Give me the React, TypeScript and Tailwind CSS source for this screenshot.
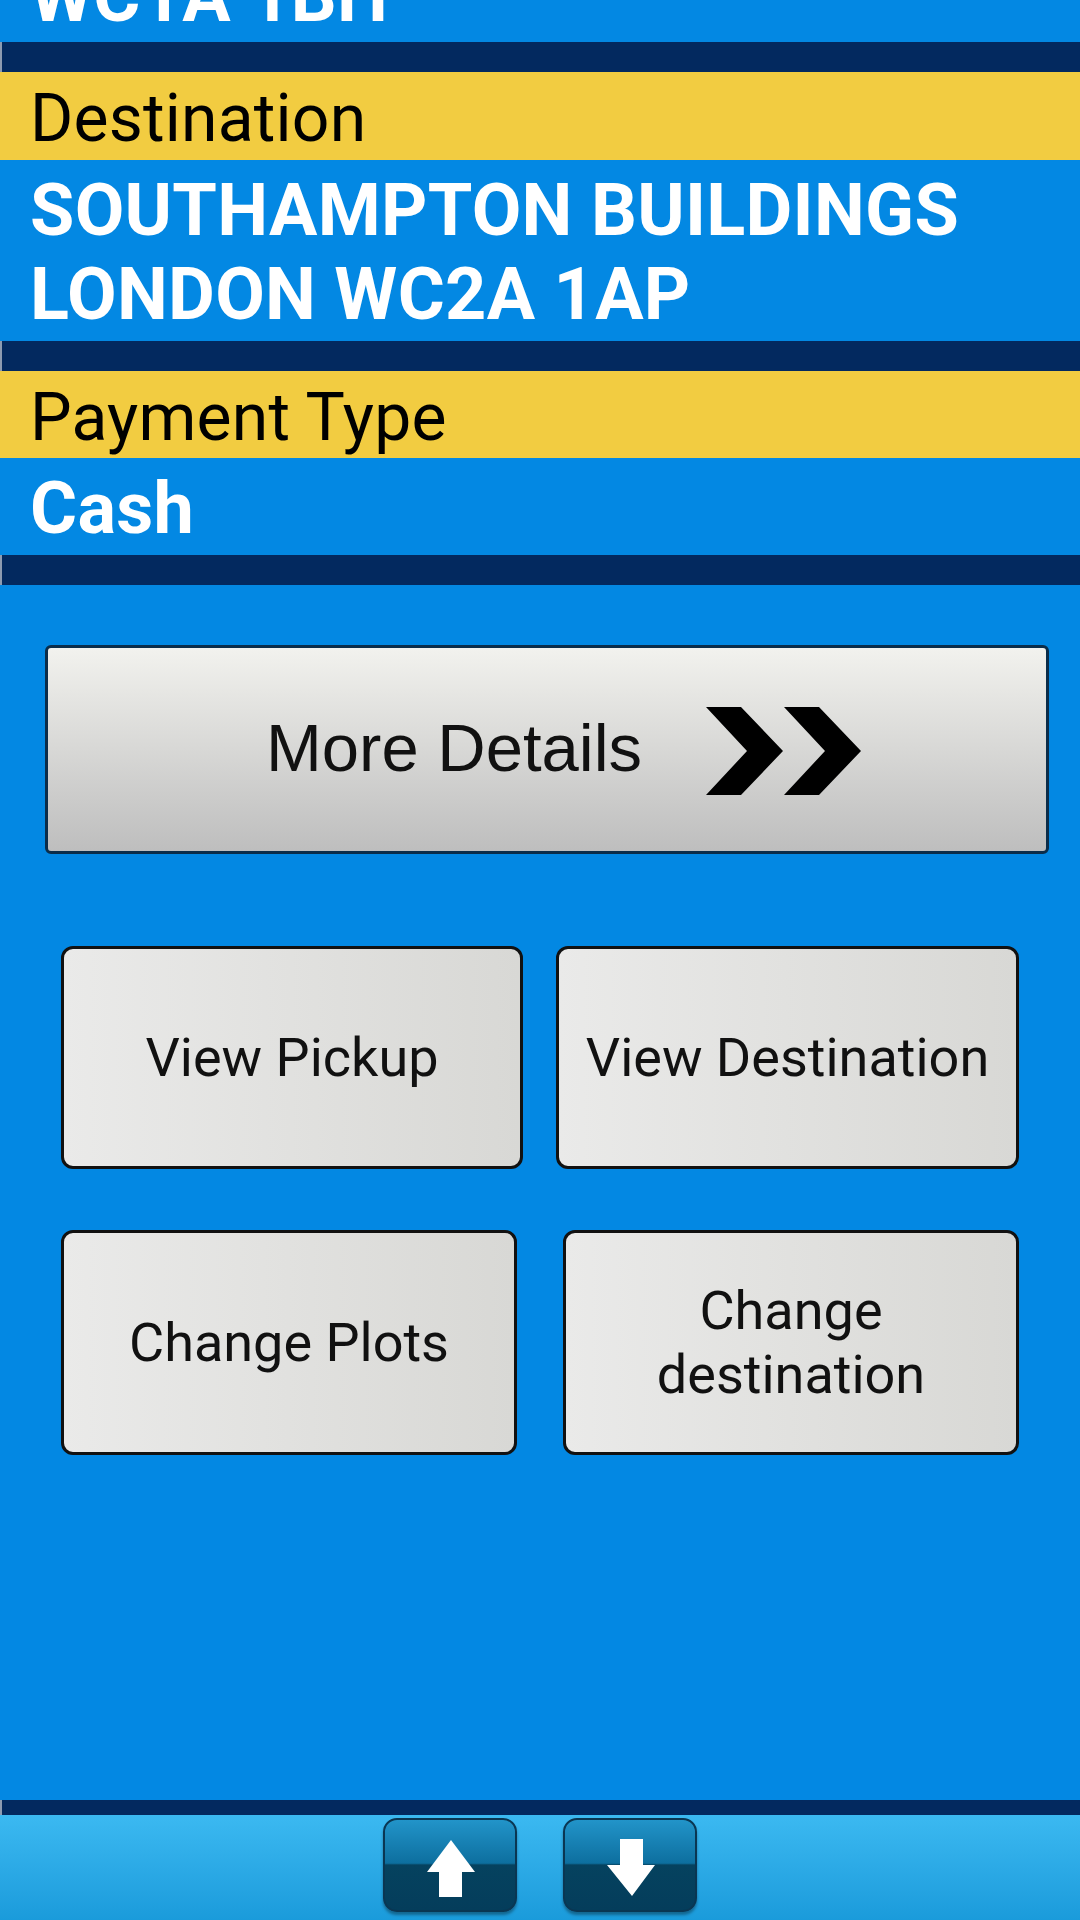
import React from 'react';

function Divider() {
  return <div className="h-[30px] shrink-0 bg-[#03295f] border-l-2 border-[#8d9bb1]" />;
}

function Label({ text, height }: { text: string; height: string }) {
  return (
    <div className={`${height} shrink-0 bg-[#f2cc41] pl-[30px] pt-[8px] text-[66px] tracking-[0.2px] leading-[1.172] text-black`}>
      {text}
    </div>
  );
}

function Value({ lines, height }: { lines: string[]; height: string }) {
  return (
    <div className={`${height} shrink-0 pl-[30px] pt-[9px] text-[72px] tracking-[0.3px] font-bold leading-[1.172] text-white`}>
      {lines.map((l) => (
        <div key={l}>{l}</div>
      ))}
    </div>
  );
}

function GridButton({ label, width }: { label: string; width: string }) {
  return (
    <button
      className={`${width} h-full rounded-[12px] border-[3px] border-[#111] bg-gradient-to-r from-[#eaeae9] to-[#d8d8d5] px-2 text-[54px] leading-[1.172] text-[#111]`}
    >
      {label}
    </button>
  );
}

function NavButton({ dir }: { dir: 'up' | 'down' }) {
  return (
    <button className="h-[94px] w-[134px] rounded-[14px] border-2 border-[#0a3652] bg-[linear-gradient(to_bottom,#2294c9_0%,#0d6f9f_48%,#05425f_50%,#043d5b_100%)] shadow-[0_3px_3px_rgba(0,0,0,0.35)] flex items-center justify-center">
      <svg width="134" height="94" viewBox="0 0 134 94" className="-m-[2px]">
        {dir === 'up' ? (
          <polygon points="68,22 92,54 79,54 79,79 56,79 56,54 44,54" fill="#fff" />
        ) : (
          <polygon points="57,21 80,21 80,47 92,47 69,78 44,47 57,47" fill="#fff" />
        )}
      </svg>
    </button>
  );
}

export default function App() {
  return (
    <div className="w-[1080px] h-[1920px] overflow-hidden bg-[#0388e3] flex flex-col font-['Roboto',sans-serif]">
      {/* Job info, scrolled */}
      <div className="mt-[-54px] flex flex-col">
        <Value lines={['WC1A 1BH']} height="h-[96px]" />
        <Divider />
        <Label text="Destination" height="h-[88px]" />
        <Value lines={['SOUTHAMPTON BUILDINGS', 'LONDON WC2A 1AP']} height="h-[181px]" />
        <Divider />
        <Label text="Payment Type" height="h-[87px]" />
        <Value lines={['Cash']} height="h-[97px]" />
        <Divider />
      </div>

      {/* More details */}
      <div className="mt-[60px] pl-[45px]">
        <button className="w-[1004px] h-[209px] rounded-[6px] border-[3px] border-[#0b2d4a] bg-gradient-to-b from-[#f2f2ee] to-[#bebebe] flex items-center pl-[218px]">
          <span className="font-['Liberation_Sans',Arial,sans-serif] text-[67px] leading-[1.15] text-[#111] -mt-[4px]">
            More Details
          </span>
          <svg width="155" height="88" viewBox="0 0 155 88" className="ml-[64px] mt-[2px]">
            <polygon points="0,0 35,0 77,44 35,88 0,88 41,44" fill="#000" />
            <polygon points="78,0 113,0 155,44 113,88 78,88 119,44" fill="#000" />
          </svg>
        </button>
      </div>

      {/* Actions */}
      <div className="mt-[92px] flex flex-col gap-[61px]">
        <div className="h-[223px] flex gap-[33px] pl-[61px]">
          <GridButton label="View Pickup" width="w-[462px]" />
          <GridButton label="View Destination" width="w-[463px]" />
        </div>
        <div className="h-[225px] flex gap-[46px] pl-[61px]">
          <GridButton label="Change Plots" width="w-[456px]" />
          <GridButton label="Change destination" width="w-[456px]" />
        </div>
      </div>

      <div className="flex-1" />

      <div className="h-[15px] shrink-0 bg-[#03295f] border-l-2 border-[#8d9bb1]" />
      <div className="h-[105px] shrink-0 bg-gradient-to-b from-[#3bb9f1] to-[#1a9bdb] flex justify-center gap-[46px] pt-[3px]">
        <NavButton dir="up" />
        <NavButton dir="down" />
      </div>
    </div>
  );
}
